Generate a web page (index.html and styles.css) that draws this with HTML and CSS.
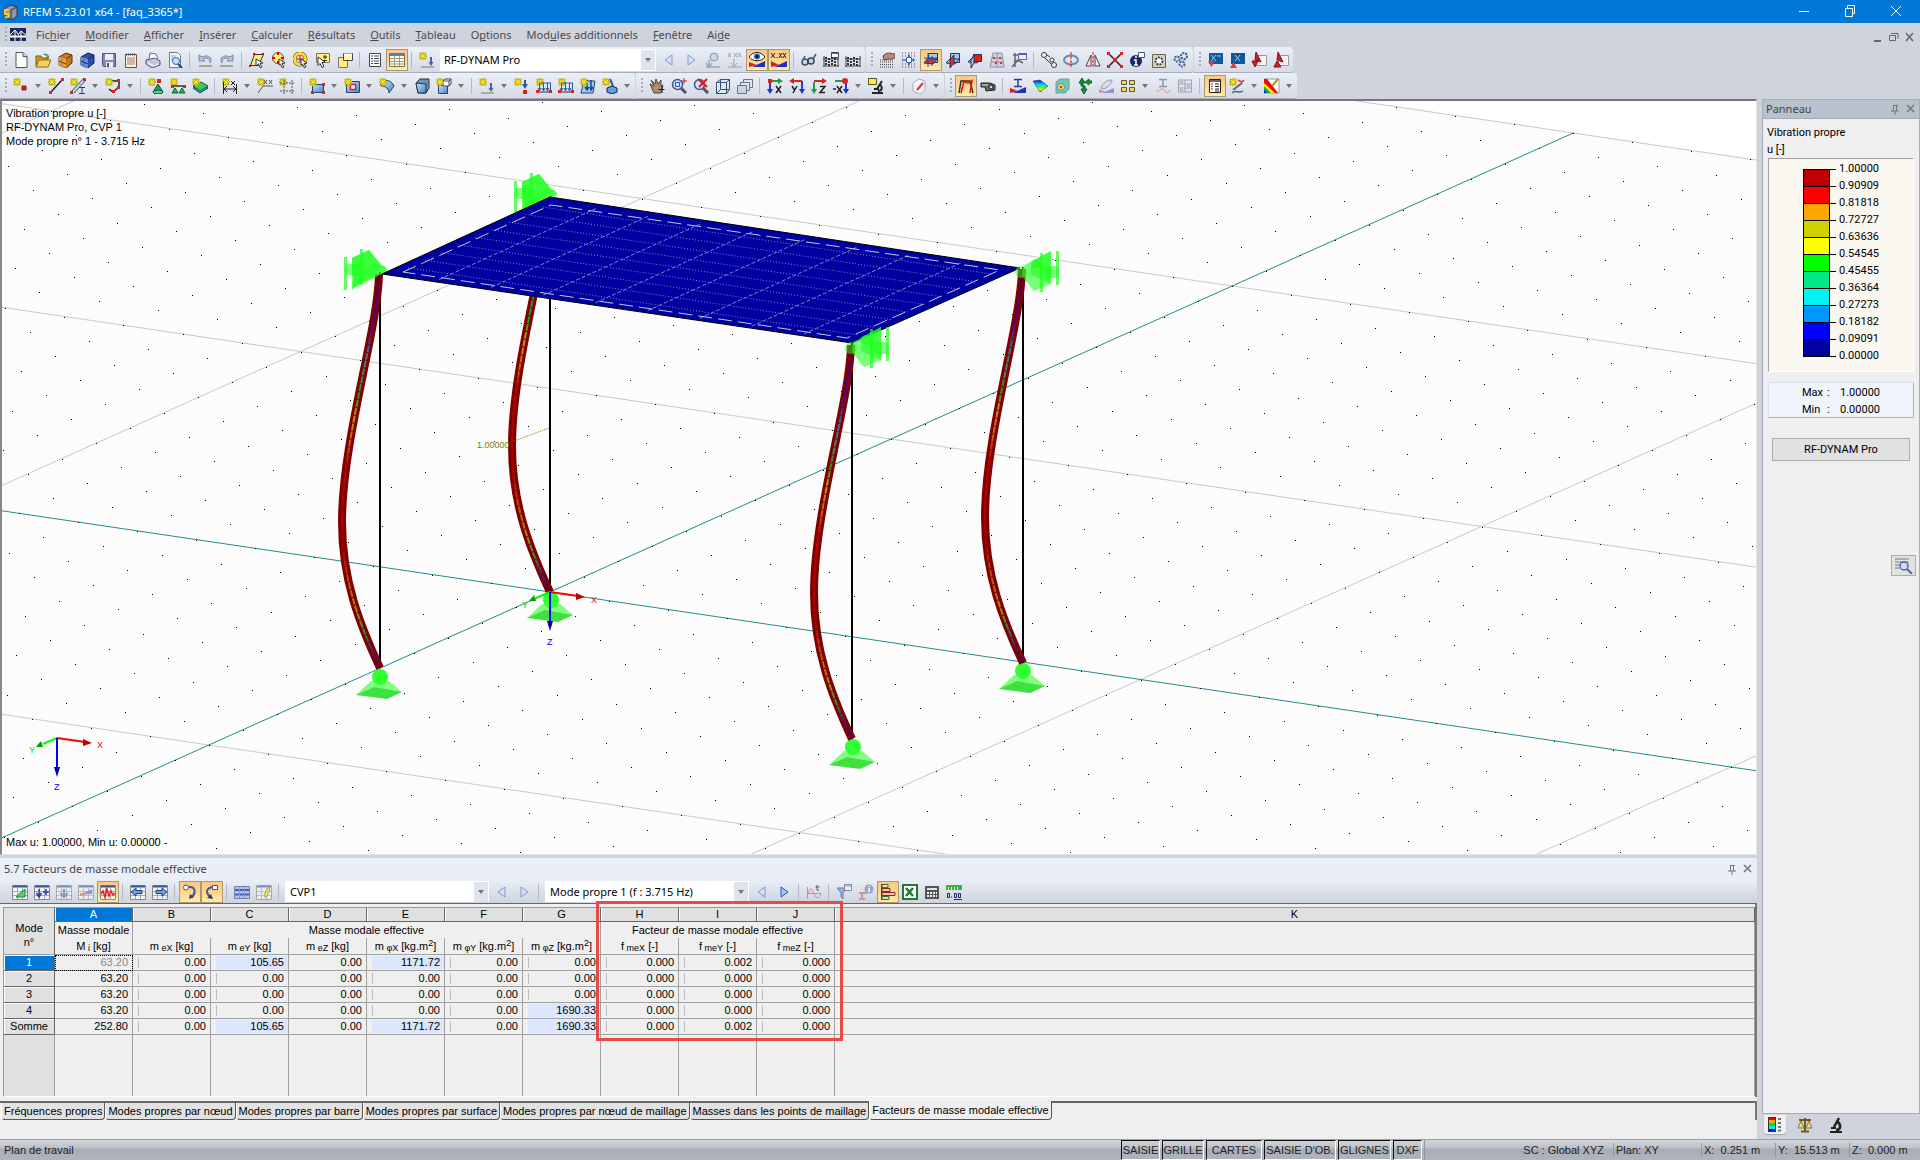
FILE: index.html
```
<!DOCTYPE html>
<html lang="fr">
<head>
<meta charset="utf-8">
<title>RFEM 5.23.01 x64 - [faq_3365*]</title>
<link rel="stylesheet" href="styles.css">
</head>
<body>
<svg class="sprite" aria-hidden="true">
<defs>
<linearGradient id="gb" x1="0" y1="0" x2="1" y2="1"><stop offset="0" stop-color="#c8e0fa"/><stop offset="1" stop-color="#4a84c4"/></linearGradient>
<linearGradient id="rb" x1="0" y1="0" x2="0" y2="1"><stop offset="0" stop-color="#00f"/><stop offset=".35" stop-color="#0cf"/><stop offset=".6" stop-color="#3f3"/><stop offset=".8" stop-color="#ff0"/><stop offset="1" stop-color="#f30"/></linearGradient>
</defs>
<symbol id="st" viewBox="0 0 16 16"><path d="M4 0v8M0 4h8M1 1l6 6M7 1 1 7" stroke="#a89a10" stroke-width="2"/><path d="M4 0v8M0 4h8M1.500 1.500l5 5M6.500 1.500l-5 5" stroke="#ffee20"/></symbol>
<symbol id="new" viewBox="0 0 16 16"><path d="M3 .5h7l4 4v11H3z" fill="#fff" stroke="#555"/><path d="M10 .5v4h4" fill="#ddd" stroke="#555"/></symbol>
<symbol id="open" viewBox="0 0 16 16"><path d="M1 14V4h5l1 2h6v3" fill="#c89b20" stroke="#7a5a10"/><path d="M1 15 4 8h12l-3 7z" fill="#f3d25a" stroke="#8a6a18"/><path d="M8 3c2-2 4-2 5 1l1-1v3h-3l1-1c-1-2-2-2-4-2" fill="#3a9a3a"/></symbol>
<symbol id="cab" viewBox="0 0 16 16"><path d="M2 5 9 1l6 2v8l-6 5-7-3z" fill="#c07820" stroke="#5c3808"/><path d="m2 5 7 2v9l-7-3z" fill="#eaa040"/><path d="m9 7 6-4M2 9l7 3M5 7.500v1M5 11.500v1" stroke="#5c3808"/></symbol>
<symbol id="cabb" viewBox="0 0 16 16"><path d="M2 5 9 1l6 2v8l-6 5-7-3z" fill="#2a50a8" stroke="#102860"/><path d="m2 5 7 2v9l-7-3z" fill="#6890e0"/><path d="m9 7 6-4M2 9l7 3M5 7.500v1M5 11.500v1" stroke="#102860"/></symbol>
<symbol id="save" viewBox="0 0 16 16"><path d="M1.500 1.500h13v13h-12l-1-1z" fill="#8a86b0" stroke="#55507a"/><path d="M4 2h8v6H4zM5 10h7v5H5z" fill="#eef"/><path d="M6 11h2v4H6z" fill="#557"/></symbol>
<symbol id="rep" viewBox="0 0 16 16"><path d="M2.500 2.500h11v13h-11z" fill="#fbf0e0" stroke="#705038"/><path d="M3 2.500h10" stroke="#444" stroke-width="2" stroke-dasharray="1 1"/><path d="M4 6h8M4 8h8M4 10h8M4 12h8" stroke="#998070"/></symbol>
<symbol id="print" viewBox="0 0 16 16"><path d="m4 7 1-6 6 1 2 5" fill="#fff" stroke="#668"/><path d="m1 8 9-2 5 3v4l-8 3-6-4z" fill="#c4c6dc" stroke="#557"/><path d="m3 11 6 3 4-2" stroke="#fff" fill="none"/></symbol>
<symbol id="prev" viewBox="0 0 16 16"><path d="M2.500.5h8l3 3v12h-11z" fill="#f4f6f8" stroke="#778"/><path d="M4 4h5M4 6h7M4 8h4" stroke="#9ab"/><circle cx="9" cy="9" r="3.500" fill="#bfe0f8" stroke="#36b"/><path d="m11 12 4 4" stroke="#247" stroke-width="2"/></symbol>
<symbol id="undo" viewBox="0 0 16 16"><path d="M2 3v6h6L6 7c4-2 7 0 7 4 3-5-1-9-8-6z" fill="#b8c4d8" stroke="#7888a8"/><path d="M2 14h13" stroke="#9aa" stroke-width="2"/></symbol>
<symbol id="redo" viewBox="0 0 16 16"><path d="M14 3v6H8l2-2c-4-2-7 0-7 4-3-5 1-9 8-6z" fill="#b8c4d8" stroke="#7888a8"/><path d="M1 14h13" stroke="#9aa" stroke-width="2"/></symbol>
<symbol id="plane" viewBox="0 0 16 16"><path d="M5.500 2.500h9l-5 11h-8z" fill="#ffee80" stroke="#333"/><path d="m7 7 7 4-3 .5 2 3.500-2 .5-1.500-3.500L7 14z" fill="#fff" stroke="#333"/><path d="M4 1h2v2H4zM13 1h2v2h-2zM0 13h2v2H0z" fill="#e00"/></symbol>
<symbol id="selc" viewBox="0 0 16 16"><circle cx="7" cy="6" r="5.500" fill="#ffee70" stroke="#554"/><path d="M7 0v3M7 9v3M1 6h3M10 6h3" stroke="#e00" stroke-width="2"/><path d="m8 7 6 4-3 .5 2 3.500-2 .5-1.500-3.500L8 13z" fill="#fff" stroke="#333"/></symbol>
<symbol id="selr" viewBox="0 0 16 16"><circle cx="7" cy="7" r="5.500" fill="none" stroke="#443" stroke-width="4"/><circle cx="7" cy="7" r="5.500" fill="none" stroke="#fd3" stroke-width="3"/><path d="M7 4v6M4 7h6" stroke="#e00"/><path d="m8 7 6 4-3 .5 2 3.500-2 .5-1.500-3.500L8 13z" fill="#fff" stroke="#333"/></symbol>
<symbol id="selp" viewBox="0 0 16 16"><path d="M1.500 1.500h13v9h-13z" fill="#ffef78" stroke="#776"/><path d="M10 3v4M8 5h4M8 8.500h4" stroke="#222"/><path d="m3 5 7 5-3 .5 2 4-2 1-2-4-2 2z" fill="#fff" stroke="#333"/></symbol>
<symbol id="selw" viewBox="0 0 16 16"><path d="M1.500 5.500h9v10h-9z" fill="#ffef78" stroke="#776"/><path d="M6.500 1.500h9v7h-9z" fill="#fff4a0" stroke="#446"/><path d="M7 2.500h8" stroke="#fff" stroke-width="2"/></symbol>
<symbol id="list" viewBox="0 0 16 16"><path d="M2.500 1.500h11v13h-11z" fill="#fff" stroke="#444"/><path d="M4 4h2M4 6.500h2M4 9h2M4 11.500h2M7 4h5M7 6.500h5M7 9h5M7 11.500h5" stroke="#445"/></symbol>
<symbol id="tab" viewBox="0 0 16 16"><path d="M.5 1.500h15v13H.5z" fill="#fffaf0" stroke="#775"/><path d="M1 3h14" stroke="#5a7fb8" stroke-width="2"/><path d="M5.500 4v10M10.500 4v10M1 6.500h14M1 9.500h14M1 12h14" stroke="#a89878"/></symbol>
<symbol id="load" viewBox="0 0 16 16"><use href="#st"/><path d="M12 5v5" stroke="#4668a0" stroke-width="2"/><path d="M9.500 10h5L12 14z" fill="#4668a0"/><path d="M2 15h13" stroke="#777"/></symbol>
<symbol id="pv" viewBox="0 0 16 16"><path d="m11 3-7 5 7 5z" fill="#d8e2f6" stroke="#8096cc"/></symbol>
<symbol id="nx" viewBox="0 0 16 16"><path d="m5 3 7 5-7 5z" fill="#d8e2f6" stroke="#8096cc"/></symbol>
<symbol id="nxb" viewBox="0 0 16 16"><path d="m5 3 7 5-7 5z" fill="#a8c4f4" stroke="#2c50b8"/></symbol>
<symbol id="eyeg" viewBox="0 0 16 16"><circle cx="9" cy="5" r="4" fill="#ccd6e4" stroke="#8898b0"/><path d="M4 8v6M1 11l3 4 3-4M1 15h14" stroke="#9aa6b8" fill="none" stroke-width="1.500"/></symbol>
<symbol id="xxg" viewBox="0 0 16 16"><path d="m1 1 3 4M4 1 1 5M7 1l3 4m0-4L7 5M11 1l3 4m0-4-3 4M7 7v6M4 11l3 4 3-4M1 15h14" stroke="#98a2b2" fill="none"/></symbol>
<symbol id="eye" viewBox="0 0 16 16"><path d="M0 5c4-6 12-6 16 0-4 5-12 5-16 0" fill="#fff" stroke="#222"/><circle cx="8" cy="4.500" r="3" fill="#2860c0"/><circle cx="8" cy="4.500" r="1.300"/><path d="M0 15v-5l8 3z" fill="#e02020"/><path d="M16 9v6H3z" fill="#2030c0"/></symbol>
<symbol id="xx" viewBox="0 0 16 16"><path d="m0 1 4 5M4 1 0 6M6 5v1M8 1l3 5m0-5L8 6M12 1l3 5m0-5-3 5" stroke="#222"/><path d="M0 15v-6l8 4z" fill="#e02020"/><path d="M16 9v6H3z" fill="#2030c0"/></symbol>
<symbol id="glas" viewBox="0 0 16 16"><circle cx="4" cy="10" r="3" fill="#bcd8f4" stroke="#456" stroke-width="1.500"/><circle cx="10" cy="9" r="3" fill="#bcd8f4" stroke="#345" stroke-width="1.500"/><path d="M2 8 4 4M12 7l3-5" stroke="#456" stroke-width="1.500"/></symbol>
<symbol id="aba" viewBox="0 0 16 16"><path d="M1 4v11M15 4v11M0 7h16M0 14h16" stroke="#444"/><path d="M3 5v8M6 6v8M9 5v8M12 6v8" stroke="#333" stroke-width="2" stroke-dasharray="2 1"/></symbol>
<symbol id="abaw" viewBox="0 0 16 16"><use href="#aba"/><path d="M8.500.5h7v5h-7z" fill="#fff" stroke="#446"/><path d="M9 1.500h6" stroke="#36b"/></symbol>
<symbol id="hand" viewBox="0 0 16 16"><path d="M1 8h14M1 10h14M1 12.500h14M1 15h14" stroke="#444" stroke-dasharray="1 1"/><path d="M4 4c3-4 7-3 12-2v4c-3 0-3 2-6 1L5 8z" fill="#b08c78" stroke="#644"/></symbol>
<symbol id="gridp" viewBox="0 0 16 16"><path d="M1 1h14M1 4h14M1 12h14M1 15h14M1 7h3M12 7h3M1 9h3M12 9h3" stroke="#444" stroke-dasharray="1 2"/><circle cx="8" cy="8" r="3" fill="#fff" stroke="#2040c0"/><path d="M8 2v4M8 10v4M2 8h4M10 8h4" stroke="#2040c0"/></symbol>
<symbol id="pl1" viewBox="0 0 16 16"><path d="M5.500 1.500h9v9h-9z" fill="#a8c8f0" stroke="#235"/><path d="m1 11 4-5 9 1-4 5z" fill="#e03030" stroke="#235"/><path d="M5 1v14M9 4v10M1 6h13" stroke="#2050a0"/></symbol>
<symbol id="pl2" viewBox="0 0 16 16"><path d="M5.500 1.500h9v9h-9zM1 11l4-4h9l-4 5z" fill="#a8c8f0" stroke="#235"/><path d="m5 8 4-5v8l-4 5z" fill="#e03030" stroke="#235"/></symbol>
<symbol id="pl3" viewBox="0 0 16 16"><path d="m1 10 4-4h9l-4 5z" fill="#a8c8f0" stroke="#235"/><path d="M6.500 2.500h8v7h-8z" fill="#f01818" stroke="#235"/><path d="m4 8 3-5v8l-3 5z" fill="#a8c8f0" stroke="#235"/></symbol>
<symbol id="net" viewBox="0 0 16 16"><path d="M4 1h9l2 14H1zM8 1v14M3 6h11M2 10h12" fill="#ccd2de" stroke="#8894a8"/><path d="M4 5h2v2H4zM10 5h2v2h-2zM6 10h2v2H6zM11 10h2v2h-2z" fill="#d33"/></symbol>
<symbol id="cfg" viewBox="0 0 16 16"><path d="m1 15 6-7 5 3M4 1v14M2 3h6M3 9h5" fill="none" stroke="#667" stroke-width="1.500"/><path d="M7.500 1.500h8v6h-8z" fill="#e8eefc" stroke="#668"/><path d="M8 2.500h7" stroke="#36b"/></symbol>
<symbol id="copy" viewBox="0 0 16 16"><circle cx="3" cy="3" r="2.500" fill="#fff" stroke="#333"/><circle cx="11" cy="8" r="2" fill="#fff" stroke="#333"/><circle cx="13" cy="13" r="2.500" fill="#fff" stroke="#333"/><path d="m6 3 3 2M4 6l6 6" fill="none" stroke="#333"/></symbol>
<symbol id="rot" viewBox="0 0 16 16"><ellipse cx="8" cy="8" rx="7" ry="4.500" fill="none" stroke="#6488b8" stroke-width="2"/><path d="M8 0v16" stroke="#e01010" stroke-dasharray="3 1"/></symbol>
<symbol id="mir" viewBox="0 0 16 16"><path d="M6 3v11H1zM10 3v11h5z" fill="#eee" stroke="#444"/><path d="M8 0v16" stroke="#e01010" stroke-dasharray="3 1"/></symbol>
<symbol id="cross" viewBox="0 0 16 16"><path d="m1 1 14 14M15 1 1 15" stroke="#222" stroke-width="1.500"/><path d="M0 0h3v3H0zM13 0h3v3h-3zM0 13h3v3H0zM13 13h3v3h-3zM6 6h4v4H6z" fill="#e02020"/></symbol>
<symbol id="info" viewBox="0 0 16 16"><circle cx="7" cy="9" r="6" fill="#182868"/><path d="M6 5h2M5 8h2v5M5 13h4" stroke="#fff" stroke-width="1.500" fill="none"/><path d="M9.500.5h6v5h-6z" fill="#fff" stroke="#557"/></symbol>
<symbol id="gear1" viewBox="0 0 16 16"><path d="M1.500 2.500h13v13h-13z" fill="#d8d0b8" stroke="#665"/><circle cx="8" cy="9" r="3.500" fill="#fff" stroke="#345" stroke-width="2" stroke-dasharray="2 1"/></symbol>
<symbol id="gear3" viewBox="0 0 16 16"><g fill="#dce8f8" stroke="#3a5f9c" stroke-width="2" stroke-dasharray="2 1"><circle cx="4" cy="7" r="2.500"/><circle cx="11" cy="4" r="3"/><circle cx="9" cy="12" r="2.500"/></g></symbol>
<symbol id="w1" viewBox="0 0 16 16"><path d="M2 1h14v11H2z" fill="#105898"/><path d="m4 3 5 6M9 3 4 9M10 4h4" stroke="#9cf"/><path d="M1 9h7l-3.500 6z" fill="#e03838"/></symbol>
<symbol id="w2" viewBox="0 0 16 16"><path d="M2 1h14v11H2z" fill="#105898"/><path d="m6 3 5 6M11 3 6 9" stroke="#9cf"/><path d="M1 16h7l-3.500-6z" fill="#e03838"/></symbol>
<symbol id="w3" viewBox="0 0 16 16"><path d="M5.500 3.500h10v10h-10z" fill="#f4f4f4" stroke="#999"/><path d="m5 0 5 10-6-2zM1 9h6l-3 6z" fill="#cc2028" stroke="#811"/></symbol>
<symbol id="w4" viewBox="0 0 16 16"><path d="M5.500 3.500h10v10h-10z" fill="#f4f4f4" stroke="#999"/><path d="m5 0 5 10-6-2zM1 15h7l-4-6z" fill="#cc2028" stroke="#811"/></symbol>
<symbol id="node" viewBox="0 0 16 16"><use href="#st"/><path d="M9 8h4v4H9z" fill="#e02020" stroke="#911"/></symbol>
<symbol id="line" viewBox="0 0 16 16"><use href="#st"/><path d="M3 14 14 2" stroke="#222" stroke-width="1.500"/><path d="M1 13h3v3H1zM13 0h3v3h-3z" fill="#e02020"/></symbol>
<symbol id="memb" viewBox="0 0 16 16"><path d="M3 14 14 2" stroke="#567" stroke-width="4"/><path d="M3 14 14 2" stroke="#bfd6ee" stroke-width="2"/><use href="#st"/><path d="M0 13h3v3H0zM13 0h3v3h-3z" fill="#e02020"/><path d="M9 9.500h6M9 15.500h6M12 10v5" stroke="#2040a0"/></symbol>
<symbol id="poly" viewBox="0 0 16 16"><path d="M7 3h7v6l-6 5-4-3" fill="none" stroke="#222" stroke-width="1.500"/><use href="#st"/><path d="M12 1h3v3h-3zM12 8h3v3h-3zM7 12h3v3H7z" fill="#e02020"/></symbol>
<symbol id="sup" viewBox="0 0 16 16"><use href="#st"/><path d="m10 6 5 8H5z" fill="#28a050" stroke="#054"/><path d="M9 1h4v4H9z" fill="#e02020"/><ellipse cx="10" cy="14" rx="5" ry="2" fill="#50d080" stroke="#054"/></symbol>
<symbol id="sup2" viewBox="0 0 16 16"><use href="#st"/><path d="M2 8h12" stroke="#333" stroke-width="1.500"/><path d="M1 7h3v3H1zM13 7h3v3h-3z" fill="#e02020"/><path d="m5 10 3 5H2zM12 10l3 5H9z" fill="#38b060" stroke="#063"/></symbol>
<symbol id="sup3" viewBox="0 0 16 16"><path d="m1 10 8-4 7 4-8 5z" fill="#30a8d8" stroke="#146"/><path d="m1 8 8-4 7 4-8 5z" fill="#40c860" stroke="#063"/><use href="#st"/></symbol>
<symbol id="dim" viewBox="0 0 16 16"><use href="#st"/><path d="M1.500 4v12M14.500 6v10M2 11h12M5 8l-3 3 3 3M11 8l3 3-3 3M9 3l4 4M13 3 9 7" fill="none" stroke="#222"/></symbol>
<symbol id="com" viewBox="0 0 16 16"><use href="#st"/><path d="m7 2 3 4m0-4L7 6M12 2l3 4m0-4-3 4M1 15l5-7h10" fill="none" stroke="#555"/></symbol>
<symbol id="gl" viewBox="0 0 16 16"><use href="#st"/><path d="M5 2v14M13 2v14M1 5h15M1 13h15" stroke="#555" stroke-dasharray="2 1"/></symbol>
<symbol id="srf" viewBox="0 0 16 16"><path d="M3.500 6.500h11v8h-11z" fill="url(#gb)" stroke="#246"/><use href="#st"/><path d="M13 5h3v3h-3zM2 13h3v3H2zM13 13h3v3h-3z" fill="#e02020"/></symbol>
<symbol id="opn" viewBox="0 0 16 16"><path d="M2.500 3.500h13v11h-13z" fill="url(#gb)" stroke="#246"/><path d="M6.500 6.500h5v5h-5z" fill="#fff" stroke="#d22" stroke-width="1.500"/><use href="#st"/></symbol>
<symbol id="nrb" viewBox="0 0 16 16"><path d="M2 5c5-4 10-3 13 3l-5 7c0-4-3-7-8-7z" fill="url(#gb)" stroke="#246"/><use href="#st"/></symbol>
<symbol id="sol" viewBox="0 0 16 16"><path d="m2 5 4-4h9v9l-3 5H4z" fill="#6f94bc" stroke="#234"/><path d="m2 5 10 1v9H4z" fill="url(#gb)" stroke="#234"/></symbol>
<symbol id="bx2" viewBox="0 0 16 16"><path d="M2.500 7.500h9v8h-9z" fill="url(#gb)" stroke="#246"/><path d="m7 3 2-2h6v5l-2 2H7zM7 3h6v5M13 3l2-2" fill="#fff" stroke="#444"/><use href="#st"/></symbol>
<symbol id="nl" viewBox="0 0 16 16"><use href="#st"/><path d="M11 2v5" stroke="#2858b0" stroke-width="2"/><path d="M8 6h6l-3 5z" fill="#2858b0"/><path d="M9 12h4v4H9z" fill="#e02020"/></symbol>
<symbol id="ll" viewBox="0 0 16 16"><use href="#st"/><path d="M3.500 5v7m4-7v7m4-7v7m3-7v7M3 5h12M2 10l1.500 3L5 10m1 0 1.500 3L9 10m1 0 1.500 3 1.500-3" fill="none" stroke="#2858b0"/><path d="M1 14h14" stroke="#333"/><path d="M0 12h3v3H0zM13 12h3v3h-3z" fill="#e02020"/></symbol>
<symbol id="vl" viewBox="0 0 16 16"><path d="M4 3h11l-2 12H1z" fill="#a8c8ec" stroke="#246"/><path d="M7 2v9M11 2v9M5 9l2 3 2-3m1 0 1 3 2-3" fill="none" stroke="#124a9c" stroke-width="1.500"/><use href="#st"/></symbol>
<symbol id="il" viewBox="0 0 16 16"><use href="#st"/><path d="m8 1 3 7" stroke="#2858b0" stroke-width="2"/><path d="m5 10 5-2 5 2v4l-5 2-5-2z" fill="#60a0e0" stroke="#124"/></symbol>
<symbol id="pan" viewBox="0 0 16 16"><path d="m5 15-4-9 4 2-3-6 4 4 1-5 2 5 3-4v6l2-1-2 8z" fill="#a88c78" stroke="#543"/><path d="M13 8v7M9.500 11.500h6" stroke="#222"/></symbol>
<symbol id="zm" viewBox="0 0 16 16"><path d="m9 9 6 6" stroke="#555" stroke-width="3"/><circle cx="6.500" cy="6.500" r="5" fill="#d0e4fa" stroke="#3a5890" stroke-width="1.500"/><path d="M4.500 4.500h4v4h-4z" fill="none" stroke="#44c"/><path d="M13 0v6M10 3h6" stroke="#c22"/></symbol>
<symbol id="zmx" viewBox="0 0 16 16"><path d="m9 9 6 6" stroke="#555" stroke-width="3"/><circle cx="6.500" cy="6.500" r="5" fill="#d0e4fa" stroke="#3a5890" stroke-width="1.500"/><path d="m5 1 9 8M14 1 6 9" stroke="#e01818" stroke-width="2"/></symbol>
<symbol id="cube" viewBox="0 0 16 16"><path d="m1.500 4.500 4-3h9v10l-3 4h-10z" fill="#dfe8f6" stroke="#3a5078"/><path d="M1.500 4.500h10v11M11.500 4.500l3-3M5.500 1.500v10h9M5.500 11.500l-4 4" fill="none" stroke="#3a5078"/></symbol>
<symbol id="cub2" viewBox="0 0 16 16"><path d="M6.500 1.500h9v8h-9z" fill="#dfe6f2" stroke="#678"/><path d="M3.500 4.500h9v8h-9z" fill="#dfe6f2" stroke="#678"/><path d="M.5 7.500h9v8h-9z" fill="#c8d6ea" stroke="#678"/></symbol>
<symbol id="ax" viewBox="0 0 16 16"><path d="M3 3h9" stroke="#2a9a40" stroke-width="2"/><path d="m11 0 5 3-5 3z" fill="#2a9a40"/><path d="M3 4v8" stroke="#3038d0" stroke-width="2"/><path d="M0 11h6l-3 5z" fill="#2030d0"/><path d="M1 1h4v4H1z" fill="#e02020"/></symbol>
<symbol id="axx" viewBox="0 0 16 16"><use href="#ax"/><path d="m9 8 5 7m0-7-5 7" stroke="#222" stroke-width="1.500"/></symbol>
<symbol id="axy" viewBox="0 0 16 16"><path d="M4 3h9" stroke="#d22" stroke-width="2"/><path d="M13 3v9" stroke="#3038d0" stroke-width="2"/><path d="M10 11h6l-3 5z" fill="#2030d0"/><path d="M5 0v6L0 3z" fill="#d22"/><path d="m3 8 2.500 4M8 8l-4 7" stroke="#222" stroke-width="1.500"/></symbol>
<symbol id="axz" viewBox="0 0 16 16"><path d="M3 3h9" stroke="#d22" stroke-width="2"/><path d="m11 0 5 3-5 3z" fill="#d22"/><path d="M3 4v8" stroke="#2a9a40" stroke-width="2"/><path d="M0 11h6l-3 5z" fill="#2a9a40"/><path d="M9 8.500h5l-5 6h5" fill="none" stroke="#222" stroke-width="1.500"/></symbol>
<symbol id="axm" viewBox="0 0 16 16"><path d="M2 3h11" stroke="#2a9a40" stroke-width="2"/><path d="M13 3v9" stroke="#3038d0" stroke-width="2"/><path d="M10 11h6l-3 5z" fill="#2030d0"/><circle cx="12" cy="3" r="3" fill="#d22"/><path d="M0 11h3m1-3 5 7m0-7-5 7" stroke="#222" stroke-width="1.500"/></symbol>
<symbol id="mic" viewBox="0 0 16 16"><path d="m14 3-5 8M12 6c3 4 2 7-2 7M4 15h11M6 11h5" fill="none" stroke="#222" stroke-width="2"/><path d="M.5.5h8v6h-8z" fill="#ffe94a" stroke="#552"/></symbol>
<symbol id="clip" viewBox="0 0 16 16"><path d="m2 5 6-4 6 2v9l-5 4-7-3z" fill="#f4f6fa" stroke="#aab"/><path d="m6 12 6-7" stroke="#d33" stroke-width="2"/></symbol>
<symbol id="defo" viewBox="0 0 16 16"><path d="M1 15 3 3h9l3 12" fill="none" stroke="#333" stroke-width="1.500"/><path d="M3 15 6 3c3 3 5 3 8 0l-2 12" fill="none" stroke="#d01818" stroke-width="1.500"/></symbol>
<symbol id="cam" viewBox="0 0 16 16"><path d="M1 5h9l5 2v5l-9 1-1-4H1z" fill="#666" stroke="#222"/><circle cx="11" cy="9" r="2" fill="#ddd" stroke="#111"/><path d="M2 7h6" stroke="#ddd"/></symbol>
<symbol id="ires" viewBox="0 0 16 16"><path d="M4 1.500h8M4 8.500h8M8 2v6" stroke="#2040a0" stroke-width="1.500"/><path d="M0 15v-5l8 3z" fill="#e02020"/><path d="M16 9v6H3z" fill="#2030c0"/></symbol>
<symbol id="rnb" viewBox="0 0 16 16"><path d="m1 3 7-1 8 6-8 6z" fill="url(#rb)" stroke="#333" stroke-width=".5"/></symbol>
<symbol id="rnc" viewBox="0 0 16 16"><path d="m2 4 4-3h9v10l-4 4H2z" fill="#6cc8b0" stroke="#79a"/><circle cx="7" cy="9" r="3.500" fill="#ee4" stroke="#39c"/><circle cx="7" cy="9" r="1.500" fill="#e33"/></symbol>
<symbol id="sres" viewBox="0 0 16 16"><path d="m6 0 3 5H7v3H5V5H3zM8 16l-3-5h2V8h2v3h2zM9 4l4-3v2h3v2h-3v2z" fill="#209020" stroke="#063"/></symbol>
<symbol id="gres" viewBox="0 0 16 16"><path d="M3 10C6 3 10 2 14 2c0 4-4 6-8 9z" fill="#d8dce4" stroke="#99a"/><path d="M1 15v-4l7 3z" fill="#e09090"/><path d="M16 10v5H4z" fill="#9098d0"/></symbol>
<symbol id="secs" viewBox="0 0 16 16"><path d="M1.500 2.500h5v4h-5zM9.500 2.500h5v4h-5zM1.500 9.500h5v4h-5zM9.500 9.500h5v4h-5z" fill="#f0d860" stroke="#653"/></symbol>
<symbol id="ig" viewBox="0 0 16 16"><path d="M4 1.500h8M4 8.500h8M8 2v6" stroke="#8898b8" stroke-width="1.500"/><path d="M1 12c4 4 5-4 8 0s4 3 6 0" fill="none" stroke="#d88"/></symbol>
<symbol id="grg" viewBox="0 0 16 16"><path d="M1 2h14M1 6h14M1 10h14M1 14h14M1.500 2v12M8 2v12M14.500 2v12" stroke="#9aa4b8" fill="none"/><path d="M3 4h3M10 8h3M3 12h3" stroke="#c8b0b0" stroke-width="2"/></symbol>
<symbol id="pnl" viewBox="0 0 16 16"><path d="M2.500 1.500h11v13h-11z" fill="#fff" stroke="#222"/><path d="M3 3h10" stroke="#667" stroke-width="2"/><path d="M4 6h2M4 8.500h2M4 11h2" stroke="#c66" stroke-width="1.500"/><path d="M8 6h4M8 8.500h4M8 11h4M8 13h4" stroke="#222"/></symbol>
<symbol id="wand" viewBox="0 0 16 16"><use href="#st"/><path d="m4 12 9-7" stroke="#667" stroke-width="2"/><path d="m9 2 4 2 2-2" stroke="#d33" fill="none" stroke-width="1.500"/><path d="M3 15c4-4 7 1 11-2" stroke="#467" fill="none" stroke-width="1.500"/></symbol>
<symbol id="cols" viewBox="0 0 16 16"><path d="M0 1h15v14H0z" fill="#fff" stroke="#999"/><path d="M0 1h3l11 14H9L0 6z" fill="#f00"/><path d="M0 5v4l6 6h5z" fill="#fe0"/><path d="M0 8v4l3 3h4z" fill="#0b2"/><path d="M0 12v3h3z" fill="#00f"/><path d="m8 8 6-7" stroke="#b89020" stroke-width="2"/></symbol>
<symbol id="tg" viewBox="0 0 16 16"><path d="M.5 1.500h15v14H.5z" fill="#f4f4f0" stroke="#888"/><path d="M1 2.500h14" stroke="#345a98" stroke-width="2"/><path d="M5.500 4v11M10.500 4v11M1 7.500h14M1 11.500h14" stroke="#aaa"/></symbol>
<symbol id="t1" viewBox="0 0 16 16"><use href="#tg"/><path d="M13 5v8H4z" fill="#60d060" stroke="#185"/></symbol>
<symbol id="t2" viewBox="0 0 16 16"><use href="#tg"/><path d="M5 5v7M2.500 9 5 13l2.500-4M9 8h6M12 5v6" fill="none" stroke="#2440a0" stroke-width="1.500"/></symbol>
<symbol id="t3" viewBox="0 0 16 16"><use href="#tg" opacity=".6"/><path d="M8 5v8M4.500 9 8 13l3.500-4" fill="none" stroke="#8898c0" stroke-width="2"/></symbol>
<symbol id="t4" viewBox="0 0 16 16"><use href="#tg" opacity=".6"/><path d="M2 12v-3l7 1z" fill="#e09090"/><path d="M14 5v5H4z" fill="#9098d0"/></symbol>
<symbol id="t5" viewBox="0 0 16 16"><use href="#tg"/><path d="m1 10 2-3 2 6 2-8 2 7 2-5 2 4 2-2" fill="none" stroke="#e02020" stroke-width="1.500"/></symbol>
<symbol id="t6" viewBox="0 0 16 16"><use href="#tg"/><path d="m1 8 5-4v2.500h6v3H6V12z" fill="#6aa0e8" stroke="#1c3c90"/></symbol>
<symbol id="t7" viewBox="0 0 16 16"><use href="#tg"/><path d="m15 8-5-4v2.500H4v3h6V12z" fill="#6aa0e8" stroke="#1c3c90"/></symbol>
<symbol id="c1" viewBox="0 0 16 16"><path d="M6 3c8-1 8 6 4 10" fill="none" stroke="#4a5890" stroke-width="2"/><circle cx="4" cy="3.500" r="2.500" fill="#fff" stroke="#555"/><path d="m7 15 1-5 4 3z" fill="#2c3c78"/></symbol>
<symbol id="c2" viewBox="0 0 16 16"><path d="M8 3C1 5 2 10 7 13" fill="none" stroke="#4a5890" stroke-width="2"/><path d="M8.500 1.500h5v4h-5z" fill="#fff" stroke="#555"/><path d="m9 15-6-1 4-4z" fill="#2c3c78"/></symbol>
<symbol id="tr" viewBox="0 0 16 16"><path d="M.5 2.500h15v12H.5z" fill="#b8c4e4" stroke="#7080b8"/><path d="M1 6h14M1 10.500h14" stroke="#4860b0" stroke-width="2"/><path d="M5.500 3v11M10.500 3v11" stroke="#8a9ad0"/></symbol>
<symbol id="tb" viewBox="0 0 16 16"><use href="#tg" opacity=".6"/><path d="m8 12 3-7 3-3-1 6-3 5z" fill="#f0e480" stroke="#b0a040"/></symbol>
<symbol id="wt" viewBox="0 0 16 16"><path d="M1.500 3v12M1 9.500h14M2 9c3-7 4-4 6 1s5 5 7 0" fill="none" stroke="#d88890"/><path d="M11 1v5h2M9.500 3h4" fill="none" stroke="#557"/></symbol>
<symbol id="fil" viewBox="0 0 16 16"><path d="M1 4h10L7 9v6l-2-2V9z" fill="#8ab4e0" stroke="#68a"/><path d="M8.500.5h7v6h-7z" fill="#e8eefc" stroke="#889"/><path d="M9 2h6" stroke="#89b"/></symbol>
<symbol id="inf2" viewBox="0 0 16 16"><path d="M1 9h8M4 9v6M1 15h6" stroke="#c99" stroke-width="2"/><circle cx="11" cy="5" r="4.500" fill="#98a4cc"/><path d="M11 4v4M11 2v1" stroke="#fff" stroke-width="1.500"/></symbol>
<symbol id="bars" viewBox="0 0 16 16"><path d="M1.500 0v16" stroke="#444"/><path d="M2 .5h6v3H2zM2 12.500h7v3H2z" fill="#c8f0a0" stroke="#464"/><path d="M2 4.500h8v3H2zM2 8.500h13v3H2z" fill="#ffc090" stroke="#733"/></symbol>
<symbol id="xls" viewBox="0 0 16 16"><path d="M1 1h14v14H1z" fill="#fff" stroke="#1f7a3a" stroke-width="2"/><path d="m4 4 7 8M11 4l-7 8" stroke="#1f7a3a" stroke-width="2.500"/></symbol>
<symbol id="calc" viewBox="0 0 16 16"><path d="M1 2h14v13H1z" fill="#555"/><path d="M3 4h10v2H3z" fill="#dde"/><path d="M3 9h10M3 12h10" stroke="#eee" stroke-width="2" stroke-dasharray="2 1"/></symbol>
<symbol id="dec" viewBox="0 0 16 16"><path d="M0 1h16v5H0z" fill="#40b040"/><path d="M2.500 3v3m3-3v3m3-3v3m3-3v3" stroke="#dfd"/><path d="M1.500 9.500h2v4h-2zM8.500 9.500h2v4h-2zM12.500 9.500h2v4h-2zM5 13h1" fill="none" stroke="#226"/><path d="M8 15.500h8" stroke="#22c"/></symbol>
<symbol id="logo" viewBox="0 0 16 16"><path d="m3 4 6-3 6 2v9l-5 4-6-3z" fill="#8a98a8" stroke="#334"/><path d="m9 6 6-3M9 6v9" stroke="#334"/><path d="M7 6H3v4h3c2 1 1 4-3 3" fill="none" stroke="#ffc81e" stroke-width="2"/></symbol>
<symbol id="dlu" viewBox="0 0 16 16"><path d="M0 1h16v13H0z" fill="#1a2a60"/><path d="M0 9.500h16" stroke="#fff" stroke-width="2"/><path d="M5 3v11M11 4v10M0 8l5-5 3 4M8 8l3-4 5 4" fill="none" stroke="#fff"/></symbol>
<symbol id="pin" viewBox="0 0 16 16"><path d="M6 4.500h5M6.500 5v5m3-5v5M4 10h8M8 10v4" fill="none" stroke="#777"/></symbol>
<symbol id="cl" viewBox="0 0 16 16"><path d="m4 4 7 7M11 4l-7 7" stroke="#777" stroke-width="1.500"/></symbol>
<symbol id="find" viewBox="0 0 18 16"><path d="M0 1h14M0 4h14M0 7h6M0 10h4" stroke="#777"/><circle cx="9" cy="8" r="4" fill="#cfe0f8" stroke="#4a64b0" stroke-width="1.500"/><path d="m12 11 5 5" stroke="#4a64b0" stroke-width="2"/></symbol>
<symbol id="leg" viewBox="0 0 16 16"><path d="M1 0h8v3H1z" fill="#f00"/><path d="M1 3h8v3H1z" fill="#fa0"/><path d="M1 6h8v3H1z" fill="#0e0"/><path d="M1 9h8v3H1z" fill="#0ee"/><path d="M1 12h8v3H1z" fill="#00f"/><path d="M1.500.5h7v14h-7z" fill="none" stroke="#333"/><path d="M11 2h3M11 6h3M11 10h3M11 13.500h3" stroke="#777" stroke-width="2"/></symbol>
<symbol id="bal" viewBox="0 0 16 16"><path d="M2 3h12M8 1v13M4 14.500h8" stroke="#6c5818" stroke-width="2"/><path d="M4 4 1 11h6zM12 4l-3 7h6z" fill="#e8d890" stroke="#8c7830"/></symbol>
<symbol id="mc2" viewBox="0 0 16 16"><path d="m12 1-5 9M11 5c4 4 2 8-2 8" fill="none" stroke="#222" stroke-width="2.500"/><path d="M3 15h12M4 11h5" stroke="#222" stroke-width="2"/></symbol>
</svg>

<header class="titlebar">
  <svg class="i"><use href="#logo"/></svg>
  <h1>RFEM 5.23.01 x64 - [faq_3365*]</h1>
  <div class="wbtns">
    <button aria-label="Réduire"><svg viewBox="0 0 12 12"><path d="M1 6.500h10" stroke="#fff"/></svg></button>
    <button aria-label="Restaurer"><svg viewBox="0 0 12 12"><path d="M1.500 3.500h7v8h-7zM3.500 3V.5h7v8H9" fill="none" stroke="#fff"/></svg></button>
    <button aria-label="Fermer"><svg viewBox="0 0 12 12"><path d="m1 1 10 10M11 1 1 11" stroke="#fff"/></svg></button>
  </div>
</header>

<nav class="menubar">
  <span class="grip"></span><svg class="i"><use href="#dlu"/></svg>
  <a href="#">Fic<u>h</u>ier</a><a href="#"><u>M</u>odifier</a><a href="#"><u>A</u>fficher</a><a href="#"><u>I</u>nsérer</a><a href="#"><u>C</u>alculer</a><a href="#"><u>R</u>ésultats</a><a href="#"><u>O</u>utils</a><a href="#"><u>T</u>ableau</a><a href="#">O<u>p</u>tions</a><a href="#">Mod<u>u</u>les additionnels</a><a href="#"><u>F</u>enêtre</a><a href="#">Ai<u>d</u>e</a>
  <div class="mdi">
    <button aria-label="Réduire le document"><svg viewBox="0 0 12 12"><path d="M2 10h7" stroke="#666" stroke-width="2"/></svg></button>
    <button aria-label="Restaurer le document"><svg viewBox="0 0 12 12"><path d="M1.500 4.500h6v5h-6zM3 2.500h7v5" fill="none" stroke="#666"/></svg></button>
    <button aria-label="Fermer le document"><svg viewBox="0 0 12 12"><path d="m2 2 7 8M9 2l-7 8" stroke="#666" stroke-width="1.500"/></svg></button>
  </div>
</nav>

<div class="bars">
  <div class="bar">
    <span class="grip"></span>
    <button class="b"><svg><use href="#new"/></svg></button><button class="b"><svg><use href="#open"/></svg></button><button class="b"><svg><use href="#cab"/></svg></button><button class="b"><svg><use href="#cabb"/></svg></button><button class="b"><svg><use href="#save"/></svg></button><button class="b"><svg><use href="#rep"/></svg></button><button class="b"><svg><use href="#print"/></svg></button><button class="b"><svg><use href="#prev"/></svg></button>
    <i class="sep"></i>
    <button class="b"><svg><use href="#undo"/></svg></button><button class="b"><svg><use href="#redo"/></svg></button>
    <i class="sep"></i>
    <button class="b"><svg><use href="#plane"/></svg></button><button class="b"><svg><use href="#selc"/></svg></button><button class="b"><svg><use href="#selr"/></svg></button><button class="b"><svg><use href="#selp"/></svg></button><button class="b"><svg><use href="#selw"/></svg></button>
    <i class="sep"></i>
    <button class="b"><svg><use href="#list"/></svg></button><button class="b on"><svg><use href="#tab"/></svg></button>
    <i class="sep"></i>
    <button class="b"><svg><use href="#load"/></svg></button>
    <label class="combo wide"><select aria-label="Cas de charge"><option>RF-DYNAM Pro</option></select></label>
    <button class="b"><svg><use href="#pv"/></svg></button><button class="b"><svg><use href="#nx"/></svg></button><button class="b"><svg><use href="#eyeg"/></svg></button><button class="b"><svg><use href="#xxg"/></svg></button><button class="b on"><svg><use href="#eye"/></svg></button><button class="b on"><svg><use href="#xx"/></svg></button>
    <i class="sep"></i>
    <button class="b"><svg><use href="#glas"/></svg></button><button class="b"><svg><use href="#abaw"/></svg></button><button class="b"><svg><use href="#aba"/></svg></button>
  </div>
  <div class="bar">
    <span class="grip"></span>
    <button class="b"><svg><use href="#hand"/></svg></button><button class="b"><svg><use href="#gridp"/></svg></button><button class="b on"><svg><use href="#pl1"/></svg></button><button class="b"><svg><use href="#pl2"/></svg></button><button class="b"><svg><use href="#pl3"/></svg></button><button class="b"><svg><use href="#net"/></svg></button><button class="b"><svg><use href="#cfg"/></svg></button>
    <i class="sep"></i>
    <button class="b"><svg><use href="#copy"/></svg></button><button class="b"><svg><use href="#rot"/></svg></button><button class="b"><svg><use href="#mir"/></svg></button><button class="b"><svg><use href="#cross"/></svg></button><button class="b"><svg><use href="#info"/></svg></button><button class="b"><svg><use href="#gear1"/></svg></button><button class="b"><svg><use href="#gear3"/></svg></button>
  </div>
  <div class="bar">
    <span class="grip"></span>
    <button class="b"><svg><use href="#w1"/></svg></button><button class="b"><svg><use href="#w2"/></svg></button><button class="b"><svg><use href="#w3"/></svg></button><button class="b"><svg><use href="#w4"/></svg></button>
  </div>
</div>
<div class="bars">
  <div class="bar">
    <span class="grip"></span>
    <button class="b d"><svg><use href="#node"/></svg></button><button class="b"><svg><use href="#line"/></svg></button><button class="b d"><svg><use href="#memb"/></svg></button><button class="b d"><svg><use href="#poly"/></svg></button>
    <i class="sep"></i>
    <button class="b"><svg><use href="#sup"/></svg></button><button class="b"><svg><use href="#sup2"/></svg></button><button class="b"><svg><use href="#sup3"/></svg></button>
    <i class="sep"></i>
    <button class="b d"><svg><use href="#dim"/></svg></button><button class="b"><svg><use href="#com"/></svg></button><button class="b"><svg><use href="#gl"/></svg></button>
    <i class="sep"></i>
    <button class="b d"><svg><use href="#srf"/></svg></button><button class="b d"><svg><use href="#opn"/></svg></button><button class="b d"><svg><use href="#nrb"/></svg></button><button class="b"><svg><use href="#sol"/></svg></button><button class="b d"><svg><use href="#bx2"/></svg></button>
    <i class="sep"></i>
    <button class="b d"><svg><use href="#load"/></svg></button><button class="b"><svg><use href="#nl"/></svg></button><button class="b"><svg><use href="#ll"/></svg></button><button class="b"><svg><use href="#ll"/></svg></button><button class="b"><svg><use href="#vl"/></svg></button><button class="b d"><svg><use href="#il"/></svg></button>
  </div>
  <div class="bar">
    <span class="grip"></span>
    <button class="b"><svg><use href="#pan"/></svg></button><button class="b"><svg><use href="#zm"/></svg></button><button class="b"><svg><use href="#zmx"/></svg></button><button class="b"><svg><use href="#cube"/></svg></button><button class="b"><svg><use href="#cub2"/></svg></button>
    <i class="sep"></i>
    <button class="b"><svg><use href="#axx"/></svg></button><button class="b"><svg><use href="#axy"/></svg></button><button class="b"><svg><use href="#axz"/></svg></button><button class="b d"><svg><use href="#axm"/></svg></button><button class="b d"><svg><use href="#mic"/></svg></button>
    <i class="sep"></i>
    <button class="b d"><svg><use href="#clip"/></svg></button>
  </div>
  <div class="bar">
    <span class="grip"></span>
    <button class="b on"><svg><use href="#defo"/></svg></button><button class="b"><svg><use href="#cam"/></svg></button>
    <i class="sep"></i>
    <button class="b"><svg><use href="#ires"/></svg></button><button class="b"><svg><use href="#rnb"/></svg></button><button class="b"><svg><use href="#rnc"/></svg></button><button class="b"><svg><use href="#sres"/></svg></button><button class="b"><svg><use href="#gres"/></svg></button><button class="b d"><svg><use href="#secs"/></svg></button><button class="b"><svg><use href="#ig"/></svg></button><button class="b"><svg><use href="#grg"/></svg></button>
    <i class="sep"></i>
    <button class="b on"><svg><use href="#pnl"/></svg></button><button class="b d"><svg><use href="#wand"/></svg></button><button class="b d"><svg><use href="#cols"/></svg></button>
  </div>
</div>

<main>
  <div class="work">
    <section class="view">
      <svg class="scene" role="img" aria-label="Vue 3D du modèle">
        <defs>
          <linearGradient id="ugrad" gradientUnits="userSpaceOnUse" x1="0" y1="274" x2="0" y2="668">
            <stop offset="0" stop-color="#500040"/><stop offset=".08" stop-color="#3000a0"/><stop offset=".15" stop-color="#4010b0"/><stop offset=".2" stop-color="#3a80a8"/><stop offset=".27" stop-color="#30a070"/><stop offset=".31" stop-color="#10b010"/><stop offset=".36" stop-color="#d0b010"/><stop offset=".44" stop-color="#d06010"/><stop offset=".48" stop-color="#d00000"/><stop offset=".7" stop-color="#b00000"/><stop offset=".78" stop-color="#c06010"/><stop offset=".86" stop-color="#b0a010"/><stop offset=".91" stop-color="#20a060"/><stop offset=".96" stop-color="#3020a0"/><stop offset="1" stop-color="#300060"/>
          </linearGradient>
          <g id="column">
            <path d="M380 272V668" stroke="#000" stroke-width="2"/>
            <path d="M379 274C378 330 342 440 342 522C342 580 360 625 380 668" fill="none" stroke="#800000" stroke-width="8"/>
            <path d="M379 274C378 330 342 440 342 522C342 580 360 625 380 668" fill="none" stroke="url(#ugrad)" stroke-width="2" stroke-dasharray="7 1" opacity=".85"/>
          </g>
          <g id="foot">
            <path d="m371 681-15 14 46-3-13-11z" fill="#80ff80"/>
            <circle cx="380" cy="677" r="8" fill="#30ff30"/>
            <path d="m356 695 18-8 28 5-15 7z" fill="#40e040"/>
          </g>
          <g id="capl" fill="#20ff20">
            <path d="m352 258 17-8 14 17-31 23z" opacity=".6"/>
            <path d="m352 258 17-8 12 15-29 12z" opacity=".7"/>
            <path d="M347 264h14v11h-14q-5-5 0-11" opacity=".6"/>
            <path d="m354 275 25-10q8 0 8 6l-15 8-20 9z" opacity=".8"/>
            <path d="M344 257h3v33h-3zM360 249h3v36h-3z" opacity=".7"/>
          </g>
          <g id="capr" fill="#20ff20">
            <path d="m1023 266 28-15v33l-17 7-12-15z" opacity=".6"/>
            <path d="m1031 262 20-11v33l-20-9z" opacity=".6"/>
            <path d="M1037 266h19q7 6 0 12h-10z" opacity=".6"/>
            <circle cx="1021" cy="272" r="6" opacity=".5"/>
            <circle cx="1036" cy="264" r="5" opacity=".6"/>
            <path d="M1056 251h3v34h-3zM1040 253h3v39h-3z" opacity=".7"/>
          </g>
          <g id="axes" fill="none">
            <path d="M0 0-14 6" stroke="#0f0" stroke-width="2"/><path d="m-21 9 5-6 2 6z" fill="#00a000"/>
            <path d="M0 0 28 4" stroke="#f00" stroke-width="2"/><path d="m35 5-9-4v7z" fill="#c00000"/>
            <path d="M0 0V30" stroke="#00f" stroke-width="2"/><path d="M-3 29h6l-3 10z" fill="#0000b0"/>
          </g>
        </defs>
        <g transform="translate(-2 -101)">
          <path d="M0-99.500 4000 492V3000H0z" fill="#fcfcfc"/>
          <g id="grid"></g>
          <use href="#foot" x="171" y="-77"/><use href="#foot" x="643" y="-6"/><use href="#foot"/><use href="#foot" x="473" y="70"/>
          <use href="#column" x="170" y="-76"/>
          <use href="#column"/>
          <path d="m514 441 35-13" stroke="#808000" stroke-dasharray="1 1"/>
          <use href="#axes" x="550" y="592"/>
          <use href="#capl"/><use href="#capl" x="170" y="-76"/>
          <path d="M382 274 550 197 1020 268 852 343z" fill="#0000a0" stroke="#000"/>
          <g id="mesh" fill="none" stroke="#8080cc" stroke-dasharray="1 2"></g>
          <path d="m403 272 148-67 449 65-153 68z" fill="none" stroke="#c8c8d8" stroke-dasharray="14 6"/>
          <use href="#column" x="643" y="-5"/><use href="#column" x="472" y="71"/>
          <use href="#capr"/><use href="#capr" x="-170" y="76"/>
          <use href="#axes" x="57" y="738"/>
          <g class="lbl">
            <text x="6" y="117">Vibration propre u [-]</text><text x="6" y="131">RF-DYNAM Pro, CVP 1</text><text x="6" y="145">Mode propre n° 1 - 3.715 Hz</text>
            <text x="6" y="846">Max u: 1.00000, Min u: 0.00000 -</text>
            <text class="small" x="477" y="448" fill="#808000">1.00000</text>
            <text class="small" x="97" y="748" fill="#f00">X</text><text class="small" x="29" y="753" fill="#0d0">Y</text><text class="small" x="54" y="790" fill="#00f">Z</text>
            <text class="small" x="591" y="603" fill="#f00">X</text><text class="small" x="522" y="608" fill="#0d0">Y</text><text class="small" x="547" y="645" fill="#00f">Z</text>
          </g>
        </g>
      </svg>
    </section>

    <section class="dock">
      <div class="dockhead"><h2>5.7 Facteurs de masse modale effective</h2><svg class="i"><use href="#pin"/></svg><svg class="i"><use href="#cl"/></svg></div>
      <div class="tools">
        <button class="b"><svg><use href="#t1"/></svg></button><button class="b"><svg><use href="#t2"/></svg></button><button class="b"><svg><use href="#t3"/></svg></button><button class="b"><svg><use href="#t4"/></svg></button><button class="b on"><svg><use href="#t5"/></svg></button>
        <i class="sep"></i>
        <button class="b"><svg><use href="#t6"/></svg></button><button class="b"><svg><use href="#t7"/></svg></button>
        <i class="sep"></i>
        <button class="b on"><svg><use href="#c1"/></svg></button><button class="b on"><svg><use href="#c2"/></svg></button>
        <i class="sep"></i>
        <button class="b"><svg><use href="#tr"/></svg></button><button class="b"><svg><use href="#tb"/></svg></button>
        <i class="sep"></i>
        <label class="combo"><select aria-label="Cas de vibration propre"><option>CVP1</option></select></label>
        <button class="b"><svg><use href="#pv"/></svg></button><button class="b"><svg><use href="#nx"/></svg></button>
        <i class="sep"></i>
        <label class="combo"><select aria-label="Mode propre"><option>Mode propre 1 (f : 3.715 Hz)</option></select></label>
        <button class="b"><svg><use href="#pv"/></svg></button><button class="b"><svg><use href="#nxb"/></svg></button>
        <i class="sep"></i>
        <button class="b"><svg><use href="#wt"/></svg></button>
        <i class="sep"></i>
        <button class="b"><svg><use href="#fil"/></svg></button><button class="b"><svg><use href="#inf2"/></svg></button><button class="b on"><svg><use href="#bars"/></svg></button><button class="b"><svg><use href="#xls"/></svg></button><button class="b"><svg><use href="#calc"/></svg></button><button class="b"><svg><use href="#dec"/></svg></button>
      </div>
      <div class="frame">
        <table>
          <colgroup><col class="c0"><col><col><col><col><col><col><col><col><col><col><col class="rest"></colgroup>
          <thead>
            <tr class="letters"><th rowspan="3" class="mode">Mode<br>n°</th><th class="sel">A</th><th>B</th><th>C</th><th>D</th><th>E</th><th>F</th><th>G</th><th>H</th><th>I</th><th>J</th><th>K</th></tr>
            <tr class="group"><th>Masse modale</th><th colspan="6">Masse modale effective</th><th colspan="3">Facteur de masse modale effective</th><th></th></tr>
            <tr class="unit"><th>M<sub> i</sub> [kg]</th><th>m<sub> eX</sub> [kg]</th><th>m<sub> eY</sub> [kg]</th><th>m<sub> eZ</sub> [kg]</th><th>m<sub> φX</sub> [kg.m<sup>2</sup>]</th><th>m<sub> φY</sub> [kg.m<sup>2</sup>]</th><th>m<sub> φZ</sub> [kg.m<sup>2</sup>]</th><th>f<sub> meX</sub> [-]</th><th>f<sub> meY</sub> [-]</th><th>f<sub> meZ</sub> [-]</th><th></th></tr>
          </thead>
          <tbody>
            <tr><th class="sel">1</th><td class="cur">63.20</td><td>0.00</td><td class="hl">105.65</td><td>0.00</td><td class="hl">1171.72</td><td>0.00</td><td>0.00</td><td>0.000</td><td>0.002</td><td>0.000</td><td></td></tr>
            <tr><th>2</th><td>63.20</td><td>0.00</td><td>0.00</td><td>0.00</td><td>0.00</td><td>0.00</td><td>0.00</td><td>0.000</td><td>0.000</td><td>0.000</td><td></td></tr>
            <tr><th>3</th><td>63.20</td><td>0.00</td><td>0.00</td><td>0.00</td><td>0.00</td><td>0.00</td><td>0.00</td><td>0.000</td><td>0.000</td><td>0.000</td><td></td></tr>
            <tr><th>4</th><td>63.20</td><td>0.00</td><td>0.00</td><td>0.00</td><td>0.00</td><td>0.00</td><td class="hl">1690.33</td><td>0.000</td><td>0.000</td><td>0.000</td><td></td></tr>
            <tr><th>Somme</th><td>252.80</td><td>0.00</td><td class="hl">105.65</td><td>0.00</td><td class="hl">1171.72</td><td>0.00</td><td class="hl">1690.33</td><td>0.000</td><td>0.002</td><td>0.000</td><td></td></tr>
            <tr class="fill"><td class="f0"></td><td></td><td></td><td></td><td></td><td></td><td></td><td></td><td></td><td></td><td></td><td></td></tr>
          </tbody>
        </table>
        <div class="mark"></div>
      </div>
      <div class="tabs" role="tablist">
        <button role="tab">Fréquences propres</button><button role="tab">Modes propres par nœud</button><button role="tab">Modes propres par barre</button><button role="tab">Modes propres par surface</button><button role="tab">Modes propres par nœud de maillage</button><button role="tab">Masses dans les points de maillage</button><button role="tab" aria-selected="true">Facteurs de masse modale effective</button>
      </div>
    </section>
  </div>

  <aside>
    <div class="panel">
      <div class="phead"><h2>Panneau</h2><svg class="i"><use href="#pin"/></svg><svg class="i"><use href="#cl"/></svg></div>
      <p class="pt">Vibration propre<br>u [-]</p>
      <div class="legend">
        <ul class="swatches"><li class="s1"></li><li class="s2"></li><li class="s3"></li><li class="s4"></li><li class="s5"></li><li class="s6"></li><li class="s7"></li><li class="s8"></li><li class="s9"></li><li class="s10"></li><li class="s11"></li></ul>
        <ul class="vals"><li>1.00000</li><li>0.90909</li><li>0.81818</li><li>0.72727</li><li>0.63636</li><li>0.54545</li><li>0.45455</li><li>0.36364</li><li>0.27273</li><li>0.18182</li><li>0.09091</li><li>0.00000</li></ul>
      </div>
      <dl class="mm"><dt>Max</dt><dd>:</dd><dd>1.00000</dd><dt>Min</dt><dd>:</dd><dd>0.00000</dd></dl>
      <button class="dyn">RF-DYNAM Pro</button>
      <button class="find" aria-label="Rechercher"><svg><use href="#find"/></svg></button>
    </div>
    <div class="ptabs"><button class="act" aria-label="Échelle"><svg><use href="#leg"/></svg></button><button aria-label="Facteurs"><svg><use href="#bal"/></svg></button><button aria-label="Filtre"><svg><use href="#mc2"/></svg></button></div>
  </aside>
</main>

<footer>
  <span class="msg">Plan de travail</span>
  <div class="modes"><button class="m1">SAISIE</button><button class="m2">GRILLE</button><button class="m3">CARTES</button><button class="m4">SAISIE D'OB.</button><button class="m5">GLIGNES</button><button class="m6">DXF</button></div>
  <span class="cs">SC : Global XYZ</span><span class="f1">Plan: XY</span><span class="f2">X:&nbsp; 0.251 m</span><span class="f2">Y:&nbsp; 15.513 m</span><span class="f2">Z:&nbsp; 0.000 m</span>
</footer>
<script src="scene.js"></script>
</body>
</html>
```
FILE: scene.js
```
// Work plane: origin, one-metre steps along X and Y in screen pixels.
const O = [550, 592], X = [59.05, 8.75], Y = [-34.11, 15.3];
const at = (i, j) => [O[0] + i * X[0] + j * Y[0], O[1] + i * X[1] + j * Y[1]];
const NS = 'http://www.w3.org/2000/svg';
function add(parent, d, attrs) {
  const p = document.createElementNS(NS, 'path');
  p.setAttribute('d', d);
  for (const k in attrs) p.setAttribute(k, attrs[k]);
  document.getElementById(parent).appendChild(p);
}
const seg = (a, b) => `M${a[0]} ${a[1]}L${b[0]} ${b[1]}`;

let grey = '', dots = '';
for (let j = -30; j <= 30; j += 10) if (j) grey += seg(at(-40, j), at(60, j));
for (let i = -40; i <= 60; i += 10) if (i) grey += seg(at(i, -30), at(i, 40));
for (let j = -30; j <= 40; j++) {
  for (let i = -40; i <= 60; i++) {
    const [x, y] = at(i, j);
    if (x > 0 && y > 100 && x < 4000 && y < 3000) dots += `M${Math.round(x)} ${Math.round(y)}h1v1h-1z`;
  }
}
add('grid', grey, { stroke: '#c8c8c8', fill: 'none' });
add('grid', seg(at(-40, 0), at(60, 0)) + seg(at(0, -30), at(0, 40)), { stroke: '#208c8c', fill: 'none' });
add('grid', dots, { fill: '#000', 'shape-rendering': 'crispEdges' });

// Surface mesh inside the slab outline.
const P = [382, 274], U = [469, 70], V = [168, -76];
const q = (u, v) => [P[0] + u * U[0] + v * V[0], P[1] + u * U[1] + v * V[1]];
let across = '', along = '';
for (let k = 1; k < 9; k++) across += seg(q(k / 9, 0.03), q(k / 9, 0.97));
for (let k = 1; k < 10; k++) along += seg(q(0.02, k / 10), q(0.98, k / 10));
add('mesh', along, {});
add('mesh', across, { 'stroke-dasharray': '4 2' });
```
FILE: styles.css
```
* { box-sizing: border-box; }
html, body { height: 100%; }
body {
  margin: 0;
  display: flex;
  flex-direction: column;
  background: #cfd3dc;
  font: 11px/14px "Noto Sans", "Open Sans", sans-serif;
  color: #000;
  overflow: hidden;
}
.sprite { position: absolute; width: 0; height: 0; }
button { font: inherit; color: inherit; padding: 0; margin: 0; border: 0; background: none; }
h1, h2, p, ul, dl, dd { margin: 0; padding: 0; font: inherit; list-style: none; }
.i { width: 16px; height: 16px; flex: none; }

.titlebar { display: flex; align-items: center; height: 23px; background: #0078d7; color: #fff; padding-left: 2px; }
.titlebar h1 { margin-left: 5px; flex: 1; }
.wbtns { display: flex; height: 21px; align-self: start; padding-right: 1px; }
.wbtns button { width: 46px; display: grid; place-items: center; }
.wbtns svg, .mdi svg { width: 12px; height: 12px; }

.menubar { display: flex; align-items: center; height: 24px; color: #4a4a52; }
.menubar .i { margin-right: 10px; }
.menubar a { color: inherit; text-decoration: none; margin-right: 15px; }
.mdi { display: flex; margin-left: auto; padding: 6px 2px 0 0; }
.mdi button { width: 16px; height: 14px; }

.grip {
  width: 10px; height: 16px; flex: none;
  background: repeating-linear-gradient(#a4aab6 0 2px, transparent 2px 4px) 5px 0 / 2px 16px no-repeat;
}
.bars { display: flex; gap: 1px; height: 26px; }
.bar {
  display: flex; align-items: center; height: 26px;
  background: linear-gradient(#ebeff8, #d6dae5);
  border-bottom: 1px solid #a9adb8;
  border-radius: 0 4px 3px 0;
  padding-right: 1px;
}
.b { width: 22px; height: 22px; flex: none; display: flex; align-items: center; padding: 0 3px; position: relative; }
.b svg { width: 16px; height: 16px; flex: none; }
.b.on { background: linear-gradient(#fbc586, #fdd68a 50%, #ffeea8); box-shadow: inset 0 0 0 1px #a89878; }
.b.d { width: 35px; }
.b.d::after { content: ""; margin-left: 6px; border: 3px solid transparent; border-top: 4px solid #777; border-bottom: 0; }
.sep { width: 8px; height: 16px; flex: none; background: linear-gradient(#b4b9c6, #b4b9c6) 3px 0 / 1px 16px no-repeat; }

.combo { position: relative; width: 204px; height: 22px; background: #fff; }
.combo.wide { width: 216px; margin: 0 2px; }
.combo select { appearance: none; border: 0; background: none; width: 100%; height: 22px; font: inherit; color: #000; padding: 0 4px; }
.combo::after { content: ""; position: absolute; right: 1px; top: 1px; width: 14px; height: 20px; background: #dfe3ec; pointer-events: none; }
.combo::before { content: ""; position: absolute; z-index: 1; right: 5px; top: 9px; border: 3px solid transparent; border-top: 4px solid #777; border-bottom: 0; pointer-events: none; }

main { flex: 1; min-height: 0; display: flex; gap: 5px; }
.work { flex: 1; min-width: 0; display: flex; flex-direction: column; }
.view { flex: 1; min-height: 0; margin-bottom: 3px; background: #fff; border: 1px solid #e4e4e4; border-top: 2px solid #777; border-left: 2px solid #888; }
.scene { display: block; width: 100%; height: 100%; }
.lbl { font: 11px "Liberation Sans", Arial, sans-serif; }
.small { font-size: 9px; }

.dock { background: #efefef; height: 281px; display: flex; flex-direction: column; }
.dockhead { display: flex; align-items: center; height: 22px; background: #eaeef7; color: #444; padding: 0 1px 0 4px; }
.dockhead h2, .phead h2 { flex: 1; }
.tools { display: flex; align-items: center; height: 23px; padding: 0 9px; background: linear-gradient(#eaeef7, #cfd3de); }
.tools .combo { height: 21px; margin-left: 2px; margin-right: 2px; }
.tools select { height: 21px; padding-left: 5px; }
.frame { position: relative; border-top: 1px solid #666; border-right: 2px solid #777; padding: 3px 0 0 3px; font-family: "Liberation Sans", Arial, sans-serif; }
table { width: 100%; table-layout: fixed; border-collapse: separate; border-spacing: 0; border-left: 1px solid #999; border-bottom: 1px solid #fff; line-height: 13px; }
col { width: 78px; }
.c0 { width: 51px; }
.rest { width: auto; }
th, td { padding: 0; font-weight: 400; height: 16px; border-right: 1px solid #a0a0a0; border-bottom: 1px solid #a0a0a0; overflow: hidden; white-space: nowrap; }
td { text-align: right; padding-right: 4px; background: linear-gradient(#bdbdbd, #bdbdbd) 5px 2px / 1px 11px no-repeat; }
td:nth-child(2), td:nth-child(5), td:last-child, .fill td { background: none; }
td.hl { background: linear-gradient(#dbe5fc, #dbe5fc) 5px 1px / 100% 13px no-repeat; }
td.cur { color: #888; outline: 1px dotted #000; outline-offset: -1px; }
th { text-align: center; }
tbody th { background: #e0e0e0; box-shadow: inset 1px 1px #fff; border-right-color: #666; border-bottom-color: #666; }
.letters th { height: 15px; background: #e0e0e0; border-top: 1px solid #999; border-right-color: #666; border-bottom-color: #666; box-shadow: inset 1px 0 #fff; }
.letters .mode { line-height: 14px; border-bottom-color: #a0a0a0; box-shadow: none; vertical-align: bottom; padding-bottom: 5px; }
tbody .sel, .letters .sel { background: #0078d7; color: #fff; }
.group th { border-bottom: 0; }
.unit th { height: 17px; }
sub, sup { font-size: 9px; line-height: 0; }
sub { vertical-align: -1px; }
sup { vertical-align: 4px; }
.fill td { height: 61px; border-bottom: 0; }
.fill td.f0 { background: #e0e0e0; }
.mark { position: absolute; left: 596px; top: -3px; width: 247px; height: 140px; border: 3px solid #ea4a44; }

.tabs { display: flex; margin-top: 4px; padding-left: 1px; border-top: 2px solid #666; border-right: 2px solid #777; font-family: "Liberation Sans", Arial, sans-serif; }
.tabs button { height: 17px; padding: 0 2px; background: #e2e2e2; border: 1px solid #555; border-top: 0; border-left-color: #fff; border-radius: 0 0 4px 4px; white-space: nowrap; }
.tabs [aria-selected] { background: #efefef; margin-top: -2px; height: 19px; }

aside { width: 158px; display: flex; flex-direction: column; }
.panel { flex: 1; background: #efefef; border: 1px solid #a4acba; display: flex; flex-direction: column; font-family: Roboto, "Noto Sans", sans-serif; }
.phead { display: flex; align-items: center; height: 19px; background: #b9c1cc; border-bottom: 1px solid #a4acba; color: #444; padding-left: 3px; font-family: "Noto Sans", sans-serif; }
.pt { line-height: 17px; padding: 5px 0 0 4px; }
.legend { display: flex; margin: 0 5px 10px; height: 214px; background: #faf7f0; border: 1px solid #a0a0a0; border-right-color: #fff; border-bottom-color: #fff; padding: 10px 0 0 34px; }
.swatches li { width: 27px; height: 17px; border: 1px solid #000; border-bottom: 0; position: relative; }
.swatches li::after { content: ""; position: absolute; left: 26px; top: -1px; width: 6px; border-top: 1px solid #000; }
.swatches li:last-child { height: 18px; border-bottom: 1px solid #000; }
.swatches li:last-child::before { content: ""; position: absolute; left: 26px; bottom: -1px; width: 6px; border-top: 1px solid #000; }
.vals { margin: -9px 0 0 9px; line-height: 17px; }
.s1 { background: #c00000; } .s2 { background: #f00; } .s3 { background: #ffa500; } .s4 { background: #d0d000; }
.s5 { background: #ff0; } .s6 { background: #0f0; } .s7 { background: #00e888; } .s8 { background: #00f4f4; }
.s9 { background: #0098ff; } .s10 { background: #00f; } .s11 { background: #0000a0; }
.mm { display: grid; grid-template-columns: 25px 13px 1fr; line-height: 17px; margin: 0 5px 20px; padding: 1px 0 0 33px; height: 36px; background: #f0f4fb; border: 1px solid #dbe3f8; border-right-color: #a8aee8; border-bottom-color: #a8aee8; }
.dyn { margin: 0 9px; height: 23px; background: #e1e1e1; border: 1px solid #adadad; }
.find { margin: 94px 3px 0 auto; width: 25px; height: 21px; background: #e1e1e1; border: 1px solid #adadad; }
.find svg { width: 18px; height: 16px; display: block; margin: 1px auto; }
.ptabs { display: flex; gap: 8px; height: 25px; padding: 1px 2px; }
.ptabs button { width: 22px; height: 19px; display: grid; place-items: center; }
.ptabs svg { width: 16px; height: 16px; }
.ptabs .act { background: #efefef; border-radius: 0 0 3px 3px; box-shadow: 0 1px 1px #9ab; }

footer { display: flex; align-items: center; height: 21px; padding-right: 3px; background: linear-gradient(#d2d5dc 0, #bcc0c8 40%, #a8adb5 45%, #b0b4bc 100%); border-top: 1px solid #9a9ea8; color: #222; font-family: "Liberation Sans", Arial, sans-serif; white-space: nowrap; }
.msg { flex: 1; padding-left: 4px; }
.modes { display: flex; gap: 2px; padding-right: 2px; border-right: 1px solid #999; }
.modes button { height: 20px; border: 1px solid #111; border-right-color: #fff; border-bottom-color: #fff; }
.m1 { width: 39px; } .m2 { width: 42px; } .m3 { width: 56px; } .m4 { width: 72px; } .m5 { width: 53px; } .m6 { width: 29px; }
.cs { width: 188px; text-align: right; padding-right: 9px; }
.f1 { width: 88px; border-left: 1px solid #999; padding-left: 2px; }
.f2 { width: 74px; border-left: 1px solid #999; padding-left: 2px; }
.f2:last-child { width: 68px; }
```
